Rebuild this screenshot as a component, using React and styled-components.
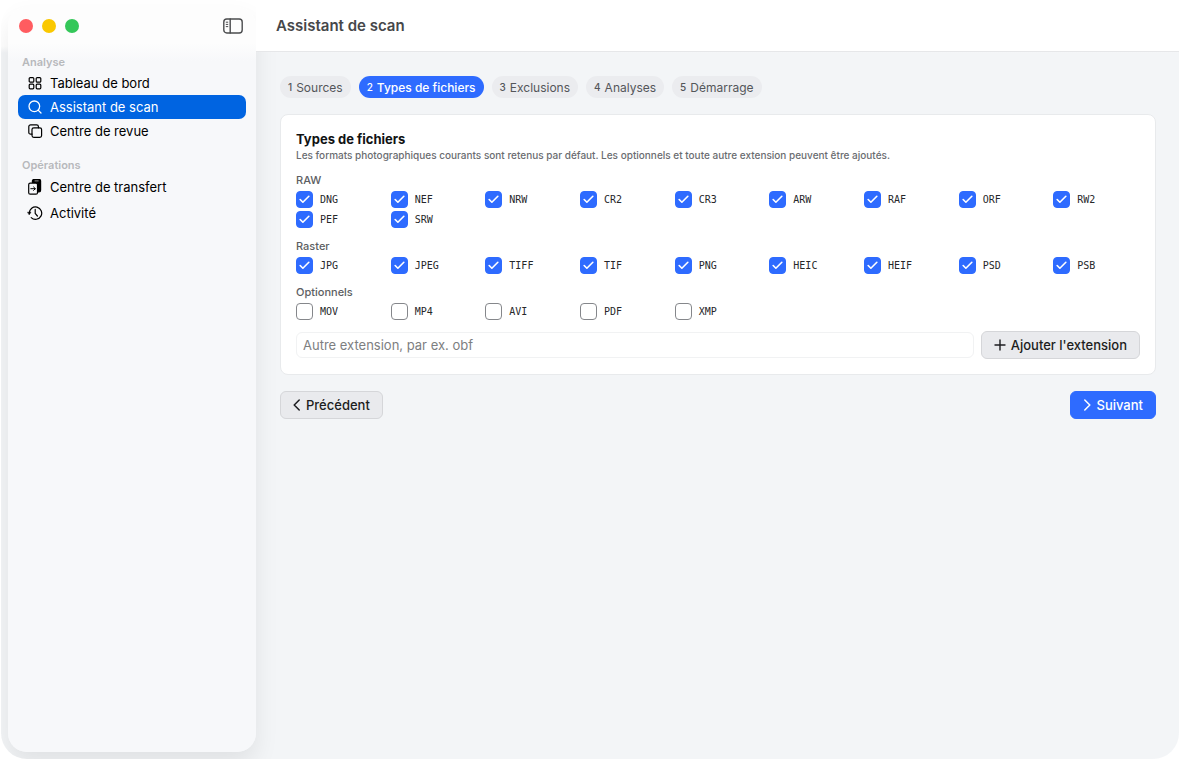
import React, { useState } from "react";
import styled, { createGlobalStyle } from "styled-components";
import { Check, Search } from "lucide-react";

const GlobalStyle = createGlobalStyle`
* { box-sizing: border-box; }
body {
	margin: 0;
	background: #fff;
	color: #111214;
	font-family: Inter, "Liberation Sans", sans-serif;
	font-size: 13px;
}
button, input { font: inherit; }
`;

const Window = styled.div`
display: flex;
min-height: calc(100vh - 1px);
margin: 0 1px 1px;
border-radius: 26px;
overflow: hidden;
background: linear-gradient(#fff 46px, #f3f5f7 53px);
`;

const Sidebar = styled.aside`
flex: 0 0 248px;
margin: 7px 0 7px 7px;
padding: 0 10px;
border-radius: 19px;
background: linear-gradient(#fdfdfd 36px, #f7f8fa 54px);
box-shadow: 0 12px 24px rgba(0, 0, 0, 0.08);
`;

const TitleBar = styled.div`
display: flex;
align-items: center;
justify-content: space-between;
height: 38px;
margin-bottom: 8px;
padding: 0 3px 0 1px;
`;

const Lights = styled.div`
display: flex;
gap: 9px;
`;

const Light = styled.button`
width: 14px;
height: 14px;
padding: 0;
border: 0;
border-radius: 50%;
background: ${({ $color }) => $color};
`;

const IconButton = styled.button`
display: flex;
padding: 0;
border: 0;
background: none;
color: #4b4c4e;
`;

const NavGroup = styled.nav`
display: flex;
flex-direction: column;
margin-bottom: 13px;
`;

const NavTitle = styled.h2`
margin: 1px 0;
padding: 0 4px;
font-size: 11px;
line-height: 16px;
font-weight: 600;
color: #b7b9bc;
`;

const NavLink = styled.a`
display: flex;
align-items: center;
gap: 7px;
height: ${({ $tall }) => ($tall ? 26 : 24)}px;
padding: 0 9px;
border-radius: 7px;
text-decoration: none;
color: ${({ $active }) => ($active ? "#fff" : "#000")};
background: ${({ $active }) => ($active ? "#0064e1" : "transparent")};

svg { flex: none; }
`;

const Main = styled.main`
flex: 1;
min-width: 0;
`;

const Header = styled.header`
position: relative;
z-index: 1;
display: flex;
align-items: center;
height: 52px;
padding: 0 20px;
border-bottom: 1px solid #e6e7e9;
background: #fff;
`;

const PageTitle = styled.h1`
margin: 0;
font-size: 15px;
line-height: 20px;
font-weight: 600;
color: #46474a;
`;

const Content = styled.div`
display: flex;
flex-direction: column;
gap: 16px;
padding: 24px 23px 24px 24px;
`;

const Steps = styled.div`
display: flex;
gap: 8px;
`;

const Step = styled.button`
display: flex;
align-items: center;
gap: 4px;
height: 22px;
padding: 0 8px;
border: 0;
border-radius: 11px;
font-size: 12px;
font-weight: ${({ $active }) => ($active ? 500 : 400)};
white-space: nowrap;
color: ${({ $active }) => ($active ? "#fff" : "#54565a")};
background: ${({ $active }) => ($active ? "#2e6bff" : "#ebecef")};
`;

const StepNumber = styled.span`
font-size: 10px;
font-weight: 500;
`;

const Card = styled.section`
display: flex;
flex-direction: column;
gap: 10px;
padding: 15px 15px 14px;
border: 1px solid #e8eaec;
border-radius: 8px;
background: #fff;
`;

const CardTitle = styled.h2`
margin: 0;
font-size: 13px;
line-height: 18px;
font-weight: 700;
`;

const Hint = styled.p`
margin: 0;
font-size: 10px;
line-height: 14px;
font-weight: 500;
color: #6a6c70;
`;

const Group = styled.fieldset`
min-width: 0;
margin: 0;
padding: 0;
border: 0;
`;

const Legend = styled.legend`
padding: 0;
margin-bottom: 2px;
font-size: 11px;
line-height: 16px;
font-weight: 500;
color: #5c5e62;
`;

const Grid = styled.div`
display: grid;
grid-template-columns: repeat(auto-fill, minmax(80px, 1fr));
gap: 2px 8px;
`;

const Option = styled.label`
display: flex;
align-items: center;
gap: 7px;
height: 18px;
font-family: "DejaVu Sans Mono", monospace;
font-size: 10px;
color: #26272a;
`;

const Box = styled.span`
display: grid;
width: 17px;
height: 17px;

> * { grid-area: 1 / 1; }

svg {
	place-self: center;
	color: #fff;
	visibility: hidden;
	pointer-events: none;
	z-index: 1;
}

input:checked + svg { visibility: visible; }
`;

const Tick = styled.input`
appearance: none;
width: 17px;
height: 17px;
margin: 0;
border: 1px solid #85878b;
border-radius: 4px;
background: #fff;

&:checked {
	border-color: #2e6bff;
	background: #2e6bff;
}
`;

const AddRow = styled.form`
display: flex;
align-items: center;
gap: 7px;
height: 30px;
`;

const TextInput = styled.input`
flex: 1;
min-width: 0;
height: 26px;
padding: 0 6px;
border: 1px solid #f1f2f3;
border-radius: 6px;
background: #fff;

&::placeholder {
	color: #7d7e81;
	opacity: 1;
}
`;

const Button = styled.button`
display: flex;
align-items: center;
gap: 5px;
height: 28px;
padding: 0 12px;
border: 1px solid ${({ $primary }) => ($primary ? "#2e6bff" : "#d5d6d9")};
border-radius: 6px;
font-weight: 500;
white-space: nowrap;
color: ${({ $primary }) => ($primary ? "#fff" : "#1c1d20")};
background: ${({ $primary }) => ($primary ? "#2e6bff" : "#e9eaed")};
`;

const Footer = styled.div`
display: flex;
justify-content: space-between;
`;

const Svg = (props) => (
	<svg width="16" height="16" viewBox="0 0 16 16" fill="none" stroke="currentColor" strokeWidth="1.2" strokeLinecap="round" strokeLinejoin="round" {...props} />
);

const SidebarIcon = () => (
	<Svg width="20" height="16" viewBox="0 0 20 16" strokeWidth="1.4">
		<rect x="0.8" y="1" width="18.4" height="14" rx="3" />
		<path d="M7.2 1v14" />
		<path d="M3.2 4.2h1.6M3.2 6.4h1.6M3.2 8.6h1.6" strokeWidth="1" />
	</Svg>
);

const GridIcon = () => (
	<Svg>
		<rect x="2.2" y="2.6" width="4.6" height="4.6" rx="1" />
		<rect x="9.2" y="2.6" width="4.6" height="4.6" rx="1" />
		<rect x="2.2" y="9.2" width="4.6" height="4.6" rx="1" />
		<rect x="9.2" y="9.2" width="4.6" height="4.6" rx="1" />
	</Svg>
);

const StackIcon = () => (
	<Svg>
		<rect x="5" y="4.8" width="9.6" height="9.6" rx="1.8" />
		<path d="M5 11.2H3.6a1.8 1.8 0 0 1-1.8-1.8V3.6a1.8 1.8 0 0 1 1.8-1.8h6a1.8 1.8 0 0 1 1.8 1.8v1.2" />
	</Svg>
);

const TransferIcon = () => (
	<Svg>
		<path d="M5.4 3.4V2a1.6 1.6 0 0 1 1.6-1.6h5A1.6 1.6 0 0 1 13.6 2v9.2a1.6 1.6 0 0 1-1.6 1.6h-1V5.6a2 2 0 0 0-2-2z" fill="currentColor" />
		<path d="M8 1.9h3.2" stroke="#fff" strokeWidth="0.6" />
		<rect x="1.7" y="4.2" width="8.8" height="11" rx="1.5" fill="#f7f8fa" />
		<path d="M3.8 9.7h4.4M6.6 8l1.7 1.7-1.7 1.7" strokeWidth="1" />
	</Svg>
);

const HistoryIcon = () => (
	<Svg>
		<path d="M2.3 8.2A6.2 6.2 0 1 1 4.2 12.6" />
		<path d="M0.9 7.2h3L2.4 9.6z" fill="currentColor" strokeWidth="0.6" />
		<path d="M8.2 4.4v4l2.2 2.6" />
	</Svg>
);

const SearchIcon = () => <Search size={16} strokeWidth={1.9} />;

const PlusIcon = () => (
	<Svg width="12" height="12" viewBox="0 0 12 12" strokeWidth="1.4">
		<path d="M6 1v10M1 6h10" />
	</Svg>
);

const BackIcon = () => (
	<Svg width="8" height="12" viewBox="0 0 8 12" strokeWidth="1.5">
		<path d="M6.2 1L1.2 6l5 5" />
	</Svg>
);

const NextIcon = () => (
	<Svg width="8" height="12" viewBox="0 0 8 12" strokeWidth="1.5">
		<path d="M1.8 1l5 5-5 5" />
	</Svg>
);

const navigation = [
	{
		title: "Analyse",
		items: [
			{ label: "Tableau de bord", Icon: GridIcon },
			{ label: "Assistant de scan", Icon: SearchIcon, active: true },
			{ label: "Centre de revue", Icon: StackIcon },
		],
	},
	{
		title: "Opérations",
		tall: true,
		items: [
			{ label: "Centre de transfert", Icon: TransferIcon },
			{ label: "Activité", Icon: HistoryIcon },
		],
	},
];

const steps = ["Sources", "Types de fichiers", "Exclusions", "Analyses", "Démarrage"];

const formats = [
	{ title: "RAW", checked: true, items: ["DNG", "NEF", "NRW", "CR2", "CR3", "ARW", "RAF", "ORF", "RW2", "PEF", "SRW"] },
	{ title: "Raster", checked: true, items: ["JPG", "JPEG", "TIFF", "TIF", "PNG", "HEIC", "HEIF", "PSD", "PSB"] },
	{ title: "Optionnels", checked: false, items: ["MOV", "MP4", "AVI", "PDF", "XMP"] },
];

const App = () => {
	const [step, setStep] = useState(1);
	const [extension, setExtension] = useState("");

	return (
		<>
			<GlobalStyle />
			<Window>
				<Sidebar>
					<TitleBar>
						<Lights>
							<Light $color="#ff5c60" aria-label="Fermer" />
							<Light $color="#fac800" aria-label="Réduire" />
							<Light $color="#34c759" aria-label="Agrandir" />
						</Lights>
						<IconButton aria-label="Barre latérale">
							<SidebarIcon />
						</IconButton>
					</TitleBar>
					{navigation.map(({ title, tall, items }) => (
						<NavGroup key={title} aria-label={title}>
							<NavTitle>{title}</NavTitle>
							{items.map(({ label, Icon, active }) => (
								<NavLink href="#" key={label} $active={active} $tall={tall}>
									<Icon />
									{label}
								</NavLink>
							))}
						</NavGroup>
					))}
				</Sidebar>
				<Main>
					<Header>
						<PageTitle>Assistant de scan</PageTitle>
					</Header>
					<Content>
						<Steps>
							{steps.map((label, index) => (
								<Step key={label} $active={index === step} onClick={() => setStep(index)}>
									<StepNumber>{index + 1}</StepNumber>
									{label}
								</Step>
							))}
						</Steps>
						<Card>
							<div>
								<CardTitle>Types de fichiers</CardTitle>
								<Hint>Les formats photographiques courants sont retenus par défaut. Les optionnels et toute autre extension peuvent être ajoutés.</Hint>
							</div>
							{formats.map(({ title, checked, items }) => (
								<Group key={title}>
									<Legend>{title}</Legend>
									<Grid>
										{items.map((name) => (
											<Option key={name}>
												<Box>
													<Tick type="checkbox" defaultChecked={checked} />
													<Check size={13} strokeWidth={3} />
												</Box>
												{name}
											</Option>
										))}
									</Grid>
								</Group>
							))}
							<AddRow onSubmit={(e) => e.preventDefault()}>
								<TextInput
									aria-label="Autre extension"
									placeholder="Autre extension, par ex. obf"
									value={extension}
									onChange={(e) => setExtension(e.target.value)}
								/>
								<Button type="submit">
									<PlusIcon />
									Ajouter l'extension
								</Button>
							</AddRow>
						</Card>
						<Footer>
							<Button onClick={() => setStep(Math.max(step - 1, 0))}>
								<BackIcon />
								Précédent
							</Button>
							<Button $primary onClick={() => setStep(Math.min(step + 1, 4))}>
								<NextIcon />
								Suivant
							</Button>
						</Footer>
					</Content>
				</Main>
			</Window>
		</>
	);
};

export default App;
